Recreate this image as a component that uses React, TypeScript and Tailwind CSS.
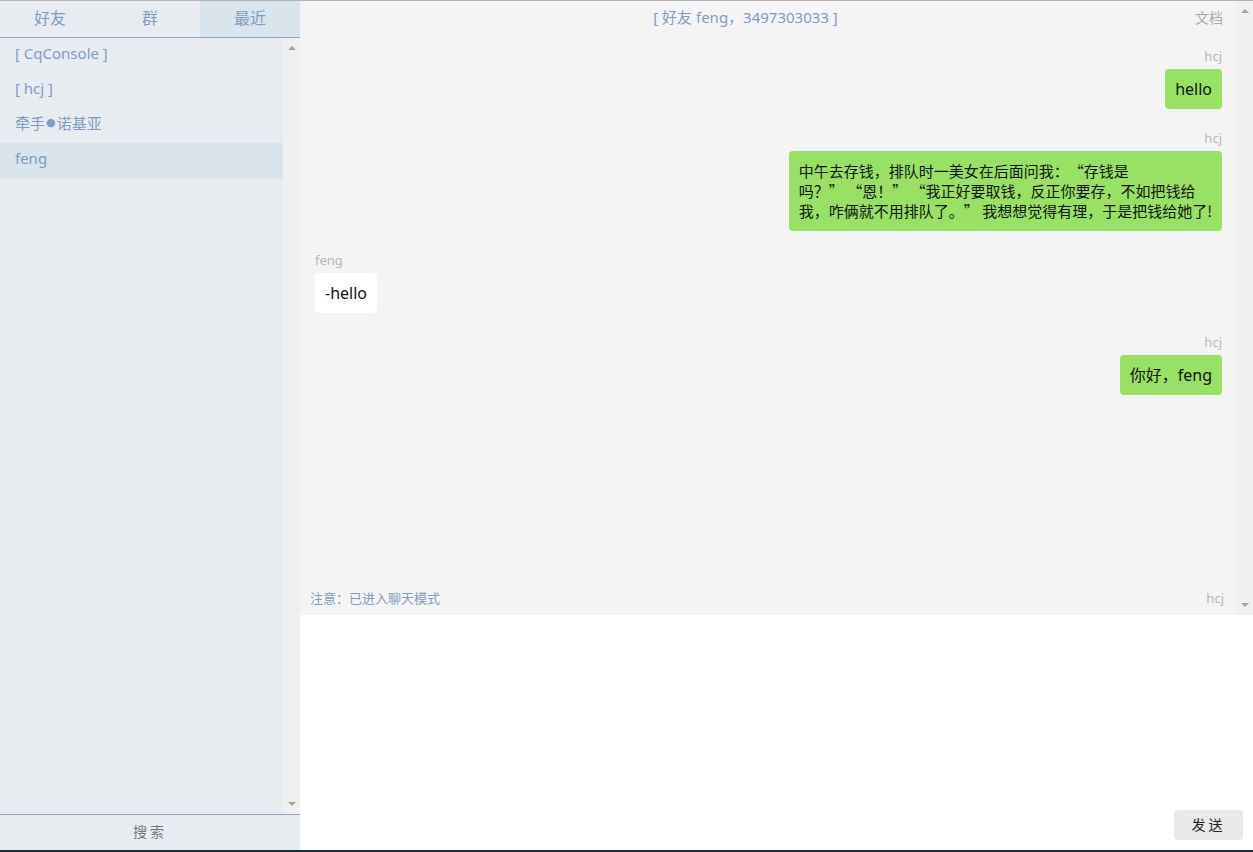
import React from "react";

const font = { fontFamily: '"Segoe UI", "Noto Sans", "Noto Sans CJK SC", sans-serif' };
const cjk = { fontFamily: '"Noto Sans CJK SC", "Noto Sans", sans-serif' };

function ScrollTrack({ className }: { className: string }) {
  return (
    <div className={`flex flex-col items-center justify-between bg-[#f0f0f0] ${className}`}>
      <span className="mt-[8px] h-0 w-0 border-x-[4px] border-b-[4px] border-x-transparent border-b-[#a3a3a3]" />
      <span className="mb-[8px] h-0 w-0 border-x-[4px] border-t-[4px] border-x-transparent border-t-[#a3a3a3]" />
    </div>
  );
}

const contacts: { name: React.ReactNode; key: string; active: boolean }[] = [
  { key: "cq", name: "[ CqConsole ]", active: false },
  { key: "hcj", name: "[ hcj ]", active: false },
  {
    key: "nokia",
    name: (
      <>
        牵手<span className="mx-[1px] text-[11px]" style={{ fontFamily: '"DejaVu Sans", sans-serif' }}>●</span>诺基亚
      </>
    ),
    active: false,
  },
  { key: "feng", name: "feng", active: true },
];

type Msg = { from: string; mine: boolean; text: React.ReactNode; long?: boolean };

const messages: Msg[] = [
  { from: "hcj", mine: true, text: "hello" },
  {
    from: "hcj",
    mine: true,
    long: true,
    text: (
      <>
        中午去存钱，排队时一美女在后面问我：“存钱是
        <br />
        吗？” “恩！” “我正好要取钱，反正你要存，不如把钱给
        <br />
        我，咋俩就不用排队了。” 我想想觉得有理，于是把钱给她了!
      </>
    ),
  },
  { from: "feng", mine: false, text: "-hello" },
  { from: "hcj", mine: true, text: "你好，feng" },
];

export default function App() {
  const tabs = ["好友", "群", "最近"];

  return (
    <div
      className="flex h-[852px] w-[1253px] flex-col overflow-hidden bg-white [text-spacing-trim:space-all]"
      style={font}
    >
      <div className="h-px bg-[#b4b4b4]" />
      <div className="flex min-h-0 flex-1">
        {/* sidebar */}
        <div className="flex w-[300px] flex-col bg-[#e8ecf0]">
          <div className="flex h-[37px] border-b border-[#8ea7c6]">
            {tabs.map((t, i) => (
              <div
                key={t}
                className={`flex w-[100px] items-center justify-center pb-[2px] text-[16px] text-[#7f9cc2] ${
                  i === 2 ? "bg-[#d9e4ec]" : ""
                }`}
              >
                {t}
              </div>
            ))}
          </div>
          <div className="flex min-h-0 flex-1">
            <div className="flex-1">
              {contacts.map((c) => (
                <div
                  key={c.key}
                  className={`flex h-[35px] items-center px-[15px] pb-[4px] text-[15px] text-[#7f9cc2] ${
                    c.active ? "bg-[#d9e4ec]" : ""
                  }`}
                >
                  {c.name}
                </div>
              ))}
            </div>
            <ScrollTrack className="w-[17px]" />
          </div>
          <div className="flex h-[36px] items-center justify-center border-t border-[#8ea7c6] pb-[2px] text-[14px] tracking-[3px] text-[#777]">
            搜索
          </div>
        </div>

        {/* chat */}
        <div className="flex flex-1 flex-col">
          <div className="flex h-[614px] bg-[#f4f4f4]">
            <div className="flex flex-1 flex-col">
              <div className="flex h-[33px] items-center">
                <div className="flex-1 pl-[10px] text-center text-[15px] text-[#7f9cc2]">
                  [ 好友 feng，3497303033 ]
                </div>
                <div className="w-[56px] pr-[14px] text-right text-[14px] text-[#aaa]">文档</div>
              </div>
              <div className="flex flex-1 flex-col gap-[20px] px-[15px] pt-[13px]">
                {messages.map((m, i) => (
                  <div key={i} className={`flex flex-col ${m.mine ? "items-end" : "items-start"}`}>
                    <div className="mb-[4px] text-[13px] leading-[18px] text-[#b8b8b8]">{m.from}</div>
                    <div
                      className={`rounded-[4px] px-[10px] py-[10px] text-[#111] ${
                        m.mine ? "bg-[#98e165]" : "bg-white"
                      } ${m.long ? "text-[15px] leading-[20px]" : "text-[16px] leading-[20px]"}`}
                      style={m.long ? cjk : undefined}
                    >
                      {m.text}
                    </div>
                  </div>
                ))}
              </div>
              <div className="flex h-[30px] items-center justify-between pb-[2px] pl-[10px] pr-[13px] text-[13px]">
                <span className="text-[#7f9cc2]">注意：已进入聊天模式</span>
                <span className="text-[#b8b8b8]">hcj</span>
              </div>
            </div>
            <ScrollTrack className="w-[16px]" />
          </div>
          <div className="flex flex-1 items-end justify-end p-[10px]">
            <button className="h-[30px] w-[69px] rounded-[4px] bg-[#e9e9e9] pb-[1px] text-[14px] tracking-[3px] text-[#222]">
              发送
            </button>
          </div>
        </div>
      </div>
      <div className="h-[2px] bg-[#1c2e36]" />
    </div>
  );
}
